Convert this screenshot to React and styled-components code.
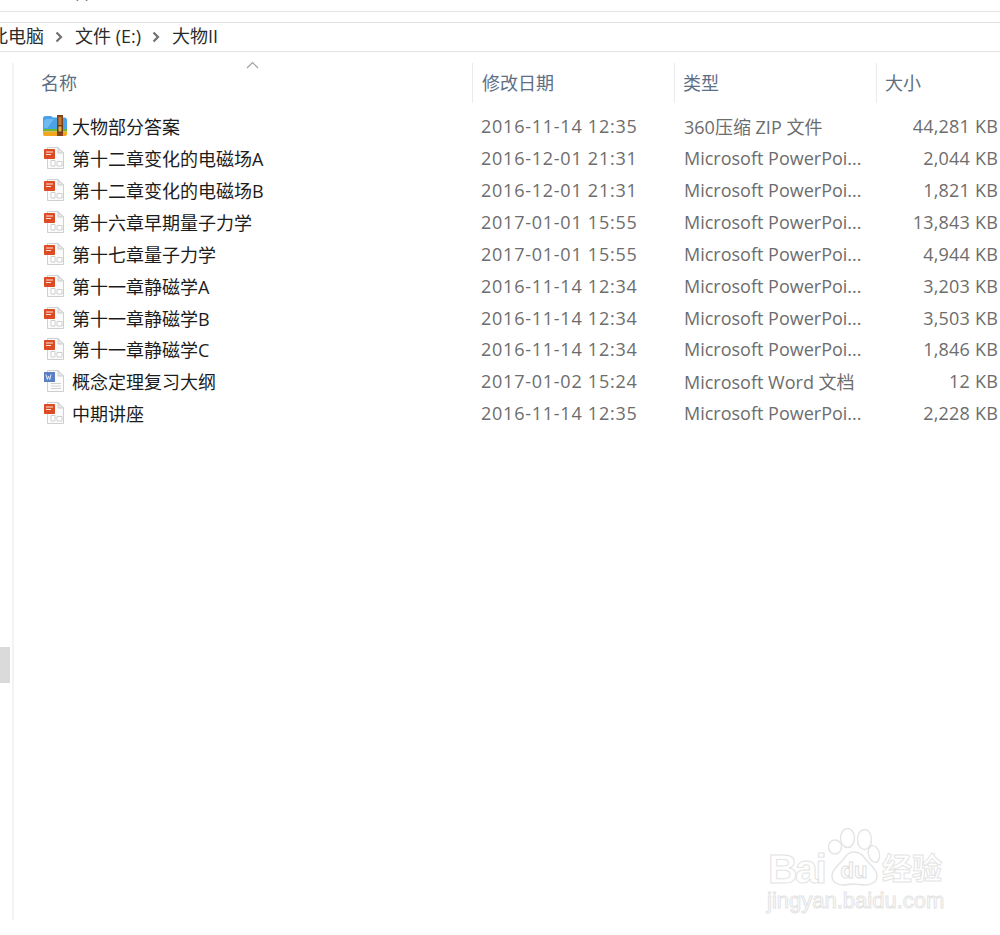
import React from "react";
import styled, { createGlobalStyle } from "styled-components";

const Global = createGlobalStyle`
  html, body { margin: 0; padding: 0; background: #fff; }
  body { font-family: "Open Sans", "Noto Sans CJK SC", sans-serif; }
`;

const Page = styled.div`
  position: relative;
  width: 1000px;
  height: 935px;
  overflow: hidden;
  background: #fff;
`;

const Ribbon = styled.div`
  height: 11px;
  border-bottom: 1px solid #e4e4e4;
  overflow: hidden;
`;

const RibbonText = styled.span`
  display: block;
  margin: -20px 0 0 54px;
  font-size: 18px;
  line-height: 24px;
  color: #444;
`;

const AddressBar = styled.div`
  margin-top: 10px;
  height: 28px;
  box-sizing: content-box;
  border-top: 1px solid #e2e2e2;
  border-bottom: 1px solid #e2e2e2;
  display: flex;
  align-items: center;
  font-size: 18px;
  color: #2b2b2b;
  overflow: hidden;
`;

const Crumb = styled.span`
  white-space: nowrap;
  line-height: 24px;
  margin-top: -2px;
  margin-left: ${(p) => p.$offset || 0}px;
`;

const Chevron = styled.svg`
  width: 8px;
  height: 12px;
  flex: none;
  margin: -1px 12px 0 11px;
`;

const Body = styled.div`
  display: flex;
  height: 883px;
`;

const Rail = styled.div`
  width: 12px;
  flex: none;
  height: 857px;
  margin-top: 11px;
  border-right: 2px solid #f3f3f3;
`;

const Thumb = styled.div`
  width: 10px;
  height: 36px;
  margin-top: 584px;
  background: #dadada;
`;

const Listing = styled.div`
  flex: 1;
  min-width: 0;
  padding-top: 11px;
`;

const columns = "458px 202px 202px 124px";

const Header = styled.div`
  display: grid;
  grid-template-columns: ${columns};
  height: 40px;
  margin-bottom: 7.5px;
`;

const HeadCell = styled.div`
  position: relative;
  padding-left: ${(p) => (p.$first ? 27 : p.$tight ? 8 : 9)}px;
  border-left: ${(p) => (p.$first ? "none" : "1px solid #ebebeb")};
  font-size: 18px;
  line-height: 40px;
  color: #5d6f85;
  box-sizing: border-box;
`;

const SortCaret = styled.svg`
  position: absolute;
  left: 232px;
  top: -2px;
  width: 13px;
  height: 8px;
`;

const Row = styled.div`
  display: grid;
  grid-template-columns: ${columns};
  height: 31.87px;
  align-items: center;
  font-size: 18px;
`;

const NameCell = styled.div`
  display: flex;
  align-items: center;
  gap: 5px;
  padding-left: 29px;
  color: #1c1c1c;
  white-space: nowrap;
`;

const DateCell = styled.div`
  padding-left: 9px;
  color: #6d6d6d;
  white-space: nowrap;
  letter-spacing: 0.75px;
`;

const TypeCell = styled.div`
  padding-left: 10px;
  color: #6d6d6d;
  white-space: nowrap;
`;

const SizeCell = styled.div`
  text-align: right;
  padding-right: 2px;
  color: #6d6d6d;
  white-space: nowrap;
  letter-spacing: 0.2px;
`;

const Watermark = styled.div`
  position: absolute;
  left: 766px;
  top: 826px;
  width: 190px;
  height: 92px;
  color: #fff;
  -webkit-text-stroke: 1px #e4e4e4;
  font-family: "Liberation Sans", "Noto Sans CJK SC", sans-serif;
`;

const MarkBai = styled.span`
  position: absolute;
  left: 2px;
  top: 20px;
  font-size: 41px;
  line-height: 46px;
  font-weight: 700;
  letter-spacing: -2.5px;
`;

const MarkJing = styled.span`
  position: absolute;
  left: 116px;
  top: 25px;
  font-size: 30px;
  line-height: 36px;
  font-weight: 700;
  white-space: nowrap;
`;

const MarkUrl = styled.span`
  position: absolute;
  left: 1px;
  top: 61px;
  font-size: 22px;
  line-height: 28px;
  white-space: nowrap;
`;

const MarkPaw = styled.span`
  position: absolute;
  left: 62px;
  top: 2px;
`;

const PawWord = styled.span`
  position: absolute;
  left: 70px;
  top: 33px;
  width: 36px;
  text-align: center;
  font-size: 22px;
  line-height: 24px;
  font-weight: 700;
  -webkit-text-stroke: 1px #e0e0e0;
`;

const Paw = () => (
  <svg width="52" height="58" viewBox="0 0 52 58" fill="#fff" stroke="#e4e4e4" strokeWidth="1.4" display="block">
    <ellipse cx="7" cy="19" rx="6.500" ry="7" />
    <ellipse cx="19.500" cy="10" rx="7" ry="9.500" />
    <ellipse cx="36.500" cy="11.500" rx="7" ry="10" />
    <ellipse cx="46" cy="26" rx="5.500" ry="8.500" transform="rotate(-15 46 26)" />
    <path d="M26 24c-7 0-9 6-13 10-4 4-9 8-9 14 0 6 5 9 11 9 4 0 7-1 11-1s7 1 11 1c7 0 12-3 12-9 0-6-5-10-9-14-4-4-6-10-14-10z" />
  </svg>
);

const ZipIcon = () => (
  <svg width="24" height="22" viewBox="0 0 24 22">
    <path d="M0 3.500C0 2 1 1 2.500 1H8l2 1.500h11.500C23 2.500 24 3.500 24 5v9H0z" fill="#4aa3e8" />
    <path d="M3 4h8l-6.500 9H1V6z" fill="#7cc4f5" opacity=".7" />
    <rect x="0" y="14" width="24" height="2.500" fill="#6fb534" />
    <path d="M0 16.500h24V19c0 1.400-1 2-2.400 2H2.400C1 21 0 20.400 0 19z" fill="#f2a71e" />
    <rect x="14" y="0" width="6" height="21" fill="#84431a" />
    <rect x="15.500" y="2" width="3" height="8" fill="#c17a33" />
    <rect x="15" y="11" width="4" height="6" fill="#e0b04f" stroke="#5b2c0e" strokeWidth=".8" />
  </svg>
);

const DocIcon = ({ kind }) => (
  <svg width="24" height="22" viewBox="0 0 24 22">
    <path d="M4.500 .5H15l5.500 5.500v15.500H4.500z" fill="#fbfbfb" stroke="#cfcfcf" />
    <path d="M15 .5v5.500h5.500z" fill="#e8e8e8" stroke="#cfcfcf" />
    {kind === "word" ? (
      <>
        <path d="M8 13.500h10M8 16h10M8 18.500h10" stroke="#d2d2d2" strokeWidth="1" />
        <rect x="1" y="2" width="11" height="10" fill="#5a7fc4" />
        <path d="M3 4.500l1.300 5 1.200-3.500 1.200 3.500 1.300-5" stroke="#dfe8f8" fill="none" strokeWidth="1" />
      </>
    ) : (
      <>
        <path d="M8 13.500h4v5.500H8zM14 14.500h5v4.500h-5z" fill="#fff" stroke="#cfcfcf" />
        <rect x="1" y="2" width="11" height="10" rx=".8" fill="#dd4b25" />
        <path d="M3 5h7M3 7.500h5" stroke="#fbe3da" strokeWidth="1.200" />
      </>
    )}
  </svg>
);

const PP = "Microsoft PowerPoi...";
const rows = [
  { icon: "zip", name: "大物部分答案", date: "2016-11-14 12:35", type: "360压缩 ZIP 文件", size: "44,281 KB" },
  { icon: "ppt", name: "第十二章变化的电磁场A", date: "2016-12-01 21:31", type: PP, size: "2,044 KB" },
  { icon: "ppt", name: "第十二章变化的电磁场B", date: "2016-12-01 21:31", type: PP, size: "1,821 KB" },
  { icon: "ppt", name: "第十六章早期量子力学", date: "2017-01-01 15:55", type: PP, size: "13,843 KB" },
  { icon: "ppt", name: "第十七章量子力学", date: "2017-01-01 15:55", type: PP, size: "4,944 KB" },
  { icon: "ppt", name: "第十一章静磁学A", date: "2016-11-14 12:34", type: PP, size: "3,203 KB" },
  { icon: "ppt", name: "第十一章静磁学B", date: "2016-11-14 12:34", type: PP, size: "3,503 KB" },
  { icon: "ppt", name: "第十一章静磁学C", date: "2016-11-14 12:34", type: PP, size: "1,846 KB" },
  { icon: "word", name: "概念定理复习大纲", date: "2017-01-02 15:24", type: "Microsoft Word 文档", size: "12 KB" },
  { icon: "ppt", name: "中期讲座", date: "2016-11-14 12:35", type: PP, size: "2,228 KB" },
];

const Sep = () => (
  <Chevron viewBox="0 0 8 12">
    <path d="M1.500 1.500L6 6l-4.500 4.500" fill="none" stroke="#707070" strokeWidth="2.200" />
  </Chevron>
);

export default function App() {
  return (
    <Page>
      <Global />
      <Ribbon>
        <RibbonText>查看</RibbonText>
      </Ribbon>
      <AddressBar>
        <Crumb $offset={-10}>此电脑</Crumb>
        <Sep />
        <Crumb>文件 (E:)</Crumb>
        <Sep />
        <Crumb>大物II</Crumb>
      </AddressBar>
      <Body>
        <Rail>
          <Thumb />
        </Rail>
        <Listing>
          <Header>
            <HeadCell $first>
              <SortCaret viewBox="0 0 13 8">
                <path d="M1 7l5.500-5.500L12 7" fill="none" stroke="#a0a0a0" strokeWidth="1.200" />
              </SortCaret>
              名称
            </HeadCell>
            <HeadCell>修改日期</HeadCell>
            <HeadCell $tight>类型</HeadCell>
            <HeadCell $tight>大小</HeadCell>
          </Header>
          {rows.map((r) => (
            <Row key={r.name}>
              <NameCell>
                {r.icon === "zip" ? <ZipIcon /> : <DocIcon kind={r.icon} />}
                {r.name}
              </NameCell>
              <DateCell>{r.date}</DateCell>
              <TypeCell>{r.type}</TypeCell>
              <SizeCell>{r.size}</SizeCell>
            </Row>
          ))}
        </Listing>
      </Body>
      <Watermark>
        <MarkBai>Bai</MarkBai>
        <MarkPaw><Paw /></MarkPaw>
        <PawWord>du</PawWord>
        <MarkJing>经验</MarkJing>
        <MarkUrl>jingyan.baidu.com</MarkUrl>
      </Watermark>
    </Page>
  );
}
